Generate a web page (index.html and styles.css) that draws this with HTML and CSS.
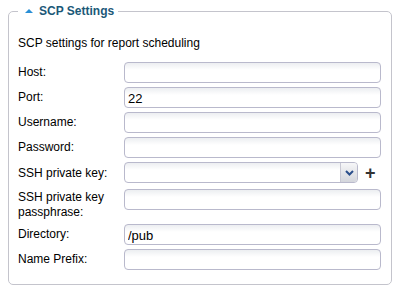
FILE: index.html
```html
<!DOCTYPE html>
<html lang="en">
<head>
  <meta charset="UTF-8" />
  <title>SCP Settings</title>
  <link rel="stylesheet" href="styles.css">
</head>
<body>
  <fieldset class="panel">
    <legend><span class="arrow"></span>SCP Settings</legend>
    <p class="desc">SCP settings for report scheduling</p>
    <div class="form">
      <label>Host:</label>
      <input type="text" class="field" />
      <label>Port:</label>
      <input type="text" class="field" value="22" />
      <label>Username:</label>
      <input type="text" class="field" />
      <label>Password:</label>
      <input type="password" class="field" />
      <label>SSH private key:</label>
      <div class="select-row">
        <div class="select">
          <span class="select-btn">
            <svg width="9" height="6" viewBox="0 0 9 6"><path d="M1 1 L4.5 4.5 L8 1" fill="none" stroke="#2b4f8c" stroke-width="2"/></svg>
          </span>
        </div>
        <span class="plus">+</span>
      </div>
      <label class="tall">SSH private key passphrase:</label>
      <input type="password" class="field tall-field" />
      <label>Directory:</label>
      <input type="text" class="field" value="/pub" />
      <label>Name Prefix:</label>
      <input type="text" class="field" />
    </div>
  </fieldset>
</body>
</html>
```

FILE: styles.css
```css
body {
  margin: 0;
  padding: 4px 4px 0 8px;
  font-family: "Liberation Sans", Arial, sans-serif;
  font-size: 12px;
  color: #000;
  background: #fff;
}
.panel {
  width: 384px;
  box-sizing: border-box;
  margin: 0;
  height: 281px;
  border: 1px solid #c4c4cc;
  border-radius: 5px;
  padding: 0 9px 0 9px;
}
legend {
  margin-left: 0;
  padding: 0 4px 0 0;
  font-weight: bold;
  font-size: 12px;
  color: #1b5878;
}
.arrow {
  display: inline-block;
  width: 0;
  height: 0;
  border-left: 4px solid transparent;
  border-right: 4px solid transparent;
  border-bottom: 4px solid #2a8fd6;
  margin: 0 6px 2px 7px;
  vertical-align: middle;
}
.desc { margin: 18px 0 12px 0; }
.form {
  display: grid;
  grid-template-columns: 106px 257px;
  row-gap: 4px;
  align-items: center;
}
label { line-height: 15px; }
label.tall { align-self: start; margin-top: 1px; }
.field, .select {
  box-sizing: border-box;
  height: 21px;
  width: 257px;
  border: 1px solid #b9b9cc;
  border-radius: 4px;
  background: linear-gradient(#eceef1, #fff 7px);
  font-family: "Liberation Sans", Arial, sans-serif;
  font-size: 13px;
  padding: 1px 3px 0 3px;
  margin: 0;
  color: #000;
}
.tall-field { align-self: start; }
.select-row {
  display: flex;
  align-items: center;
  height: 21px;
  margin-bottom: 2px;
}
.select {
  width: 234px;
  display: flex;
  justify-content: flex-end;
  padding: 0;
  overflow: hidden;
}
.select-btn {
  width: 16px;
  height: 19px;
  border-left: 1px solid #c8c8d4;
  background: linear-gradient(#f6f6f8, #d4d6dc);
  display: flex;
  align-items: center;
  justify-content: center;
}
.plus {
  margin-left: 7px;
  font-size: 18px;
  font-weight: bold;
  color: #333;
  line-height: 18px;
}
```
